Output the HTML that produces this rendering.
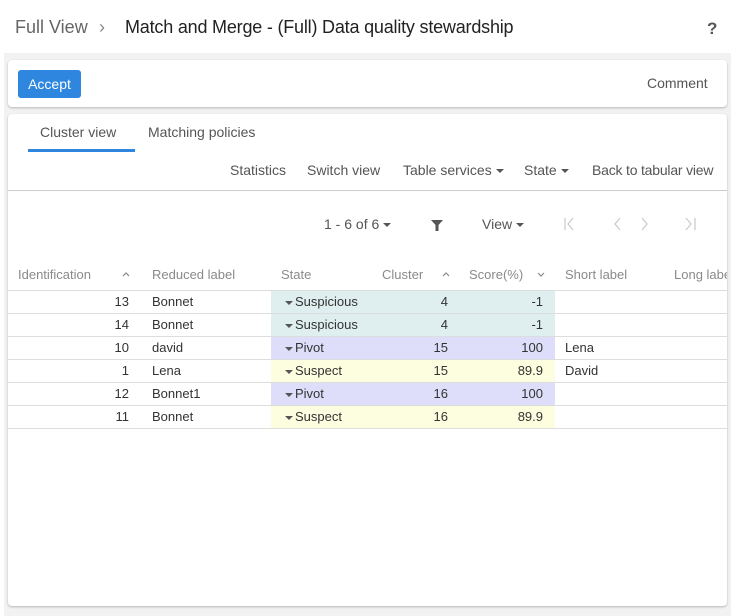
<!DOCTYPE html>
<html><head><meta charset="utf-8"><style>
*{box-sizing:border-box;margin:0;padding:0}
body{width:739px;height:616px;background:#fff;font-family:"Liberation Sans",sans-serif;position:relative;overflow:hidden;color:#333}
.abs{position:absolute;white-space:nowrap}
.bg{position:absolute;left:4px;top:53px;width:727px;height:563px;background:#f2f2f2}
.card{position:absolute;background:#fff;border-radius:4px;box-shadow:0 1px 2px rgba(0,0,0,.25)}
.t{font-size:13px;color:#555}
.th{font-size:13px;color:#8a8a8a;top:267px}
.row{position:absolute;left:8px;width:719px;height:23px;border-bottom:1px solid #ddd;font-size:13px;color:#333}
.row span{position:absolute;top:3px;white-space:nowrap}
.c{position:absolute;top:0;height:22px}
.tri{display:inline-block;width:0;height:0;border-left:4px solid transparent;border-right:4px solid transparent;border-top:4px solid #555;vertical-align:middle;margin-right:2px}
</style></head><body>
<div class="bg"></div>
<div class="abs" style="left:4px;top:0;width:727px;height:53px;background:#fff"></div>
<div class="abs" style="left:15px;top:17px;font-size:18px;color:#666">Full View</div>
<div class="abs" style="left:99px;top:17px;font-size:18px;color:#888">›</div>
<div class="abs" style="left:125px;top:17px;font-size:18px;color:#222;letter-spacing:-0.2px">Match and Merge - (Full) Data quality stewardship</div>
<div class="abs" style="left:707px;top:19px;font-size:17px;font-weight:bold;color:#555">?</div>

<div class="card" style="left:8px;top:60px;width:719px;height:47px"></div>
<div class="abs" style="left:18px;top:70px;width:63px;height:28px;background:#2e86de;border-radius:3px;color:#fff;font-size:14px;text-align:center;line-height:28px">Accept</div>
<div class="abs t" style="left:647px;top:75px;font-size:14px">Comment</div>

<div class="card" style="left:8px;top:114px;width:719px;height:492px;overflow:hidden">
<div class="abs" style="left:666px;top:153px;font-size:13px;color:#8a8a8a">Long label</div>
</div>
<div class="abs" style="left:40px;top:124px;font-size:14px;color:#555">Cluster view</div>
<div class="abs" style="left:148px;top:124px;font-size:14px;color:#555">Matching policies</div>
<div class="abs" style="left:28px;top:149px;width:107px;height:3px;background:#2e86de"></div>
<div class="abs t" style="left:230px;top:162px;font-size:14px">Statistics</div>
<div class="abs t" style="left:307px;top:162px;font-size:14px">Switch view</div>
<div class="abs t" style="left:403px;top:162px;font-size:14px">Table services <span class="tri"></span></div>
<div class="abs t" style="left:524px;top:162px;font-size:14px">State <span class="tri"></span></div>
<div class="abs t" style="left:592px;top:162px;font-size:14px;letter-spacing:-0.2px">Back to tabular view</div>
<div class="abs" style="left:8px;top:190px;width:719px;height:1px;background:#ccc"></div>

<div class="abs t" style="left:324px;top:216px;font-size:14px">1 - 6 of 6 <span class="tri"></span></div>
<svg class="abs" style="left:430px;top:218px" width="14" height="14" viewBox="0 0 14 14"><path d="M1 2h12l-4.5 5v6h-3V7z" fill="#555"/></svg>
<div class="abs t" style="left:482px;top:216px;font-size:14px">View <span class="tri"></span></div>
<svg class="abs" style="left:562px;top:216px" width="140" height="16" viewBox="0 0 140 16" fill="none" stroke="#ccc" stroke-width="1.3"><path d="M3 2v12M11 2l-5 6 5 6"/><path d="M58 2l-5 6 5 6"/><path d="M80 2l5 6-5 6"/><path d="M124 2l5 6-5 6M133 2v12"/></svg>

<div class="abs th" style="left:18px">Identification</div>
<svg class="abs" style="left:122px;top:271px" width="8" height="6"><path d="M1 5l3-3 3 3" fill="none" stroke="#888" stroke-width="1.2"/></svg>
<div class="abs th" style="left:152px">Reduced label</div>
<div class="abs th" style="left:281px">State</div>
<div class="abs th" style="left:382px">Cluster</div>
<svg class="abs" style="left:442px;top:271px" width="8" height="6"><path d="M1 5l3-3 3 3" fill="none" stroke="#888" stroke-width="1.2"/></svg>
<div class="abs th" style="left:469px">Score(%)</div>
<svg class="abs" style="left:537px;top:272px" width="8" height="6"><path d="M1 1l3 3 3-3" fill="none" stroke="#888" stroke-width="1.2"/></svg>
<div class="abs th" style="left:565px">Short label</div>
<div class="abs" style="left:8px;top:290px;width:719px;height:1px;background:#ddd"></div>

<div class="row" style="top:291px"><div class="c" style="left:263px;width:284px;background:#dfeeee"></div><span style="right:598px">13</span><span style="left:144px">Bonnet</span><span style="left:277px"><i class="tri"></i>Suspicious</span><span style="right:279px">4</span><span style="right:184px">-1</span></div>
<div class="row" style="top:314px"><div class="c" style="left:263px;width:284px;background:#dfeeee"></div><span style="right:598px">14</span><span style="left:144px">Bonnet</span><span style="left:277px"><i class="tri"></i>Suspicious</span><span style="right:279px">4</span><span style="right:184px">-1</span></div>
<div class="row" style="top:337px"><div class="c" style="left:263px;width:284px;background:#dedefa"></div><span style="right:598px">10</span><span style="left:144px">david</span><span style="left:277px"><i class="tri"></i>Pivot</span><span style="right:279px">15</span><span style="right:184px">100</span><span style="left:557px">Lena</span></div>
<div class="row" style="top:360px"><div class="c" style="left:263px;width:284px;background:#fdfde0"></div><span style="right:598px">1</span><span style="left:144px">Lena</span><span style="left:277px"><i class="tri"></i>Suspect</span><span style="right:279px">15</span><span style="right:184px">89.9</span><span style="left:557px">David</span></div>
<div class="row" style="top:383px"><div class="c" style="left:263px;width:284px;background:#dedefa"></div><span style="right:598px">12</span><span style="left:144px">Bonnet1</span><span style="left:277px"><i class="tri"></i>Pivot</span><span style="right:279px">16</span><span style="right:184px">100</span></div>
<div class="row" style="top:406px"><div class="c" style="left:263px;width:284px;background:#fdfde0"></div><span style="right:598px">11</span><span style="left:144px">Bonnet</span><span style="left:277px"><i class="tri"></i>Suspect</span><span style="right:279px">16</span><span style="right:184px">89.9</span></div>
</body></html>
